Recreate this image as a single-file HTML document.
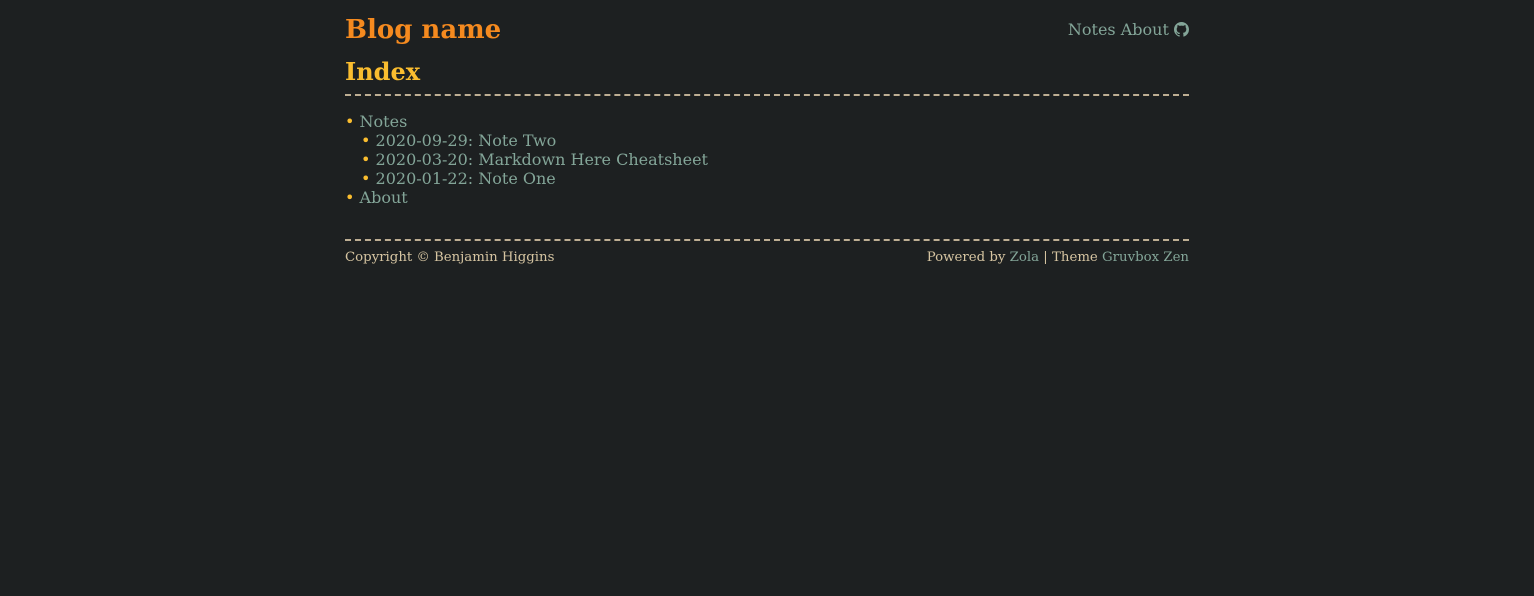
<!DOCTYPE html>
<html><head><meta charset="utf-8"><style>
html,body{margin:0;background:#1d2021;}
body{font-family:"DejaVu Serif","Liberation Serif",serif;color:#d5c4a1;}
.c{position:relative;width:844px;margin-left:345px;}
a{color:#83a598;text-decoration:none;}
.title{position:absolute;top:13px;left:0;font-size:26px;font-weight:bold;color:#f58a1f;line-height:34px;}
.nav{position:absolute;top:20px;right:0;font-size:16px;line-height:20px;color:#83a598;}
h1{position:absolute;top:56px;left:0;margin:0;font-size:24px;color:#fabd2f;line-height:32px;}
.hr{position:absolute;left:0;width:844px;height:0;border-top:2px dashed #bdae93;}
ul{list-style:none;margin:0;padding:0;font-size:16px;line-height:19px;}
li::before{content:"• ";color:#fabd2f;}
ul ul{padding-left:16px;}
.list{position:absolute;top:112px;left:0;}
.foot{position:absolute;top:249px;left:0;width:844px;font-size:13.3px;line-height:17px;color:#d5c4a1;}
</style></head><body>
<div class="c">
<div class="title">Blog name</div>
<div class="nav"><a>Notes</a> <a>About</a> <svg width="15" height="15" viewBox="0 0 16 16" style="vertical-align:-2px"><path fill="#83a598" d="M8 0C3.58 0 0 3.58 0 8c0 3.54 2.29 6.530 5.47 7.59.4.07.55-.17.55-.38v-1.33c-2.230.48-2.7-1.07-2.7-1.07-.36-.93-.89-1.17-.89-1.17-.73-.5.05-.49.05-.49.8.06 1.23.83 1.23.83.71 1.23 1.87.87 2.33.66.07-.52.28-.87.51-1.07-1.78-.2-3.64-.89-3.64-3.95 0-.87.31-1.59.82-2.15-.08-.2-.36-1.02.08-2.12 0 0 .67-.21 2.2.82a7.6 7.6 0 014 0c1.53-1.04 2.2-.82 2.2-.82.44 1.1.16 1.92.08 2.12.51.56.82 1.27.82 2.15 0 3.07-1.87 3.75-3.65 3.950.29.25.54.73.54 1.48v2.2c0 .21.15.46.55.38A8.01 8.01 0 0016 8c0-4.42-3.58-8-8-8z"/></svg></div>
<h1>Index</h1>
<div class="hr" style="top:94px"></div>
<div class="list"><ul>
<li><a>Notes</a><ul>
<li><a>2020-09-29: Note Two</a></li>
<li><a>2020-03-20: Markdown Here Cheatsheet</a></li>
<li><a>2020-01-22: Note One</a></li>
</ul></li>
<li><a>About</a></li>
</ul></div>
<div class="hr" style="top:239px"></div>
<div class="foot"><span>Copyright © Benjamin Higgins</span><span style="float:right">Powered by <a>Zola</a> | Theme <a>Gruvbox Zen</a></span></div>
</div>
</body></html>
